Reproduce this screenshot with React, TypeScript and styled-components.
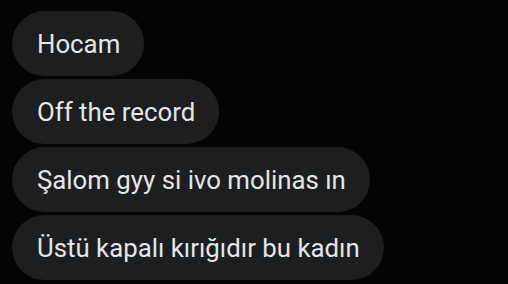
import React from 'react';
import styled, { createGlobalStyle } from 'styled-components';

const GlobalStyle = createGlobalStyle`
  html, body {
    margin: 0;
    padding: 0;
    background: #030405;
  }
`;

const Thread = styled.div`
  display: flex;
  flex-direction: column;
  align-items: flex-start;
  gap: 3px;
  padding: 11px 12px;
  width: 508px;
  height: 284px;
  box-sizing: border-box;
  overflow: hidden;
  font-family: Roboto, 'Liberation Sans', sans-serif;
`;

const Bubble = styled.div`
  display: flex;
  align-items: center;
  height: 65px;
  flex-shrink: 0;
  padding: 0 24px 0 25px;
  border-radius: 33px;
  background: #1d1e20;
  color: #e4e6e7;
  font-size: 25.8px;
  white-space: nowrap;
`;

const messages = [
  'Hocam',
  'Off the record',
  'Şalom gyy si ivo molinas ın',
  'Üstü kapalı kırığıdır bu kadın',
];

const App: React.FC = () => {
  return (
    <>
      <GlobalStyle />
      <Thread>
        {messages.map((m) => (
          <Bubble key={m}>{m}</Bubble>
        ))}
      </Thread>
    </>
  );
};

export default App;
